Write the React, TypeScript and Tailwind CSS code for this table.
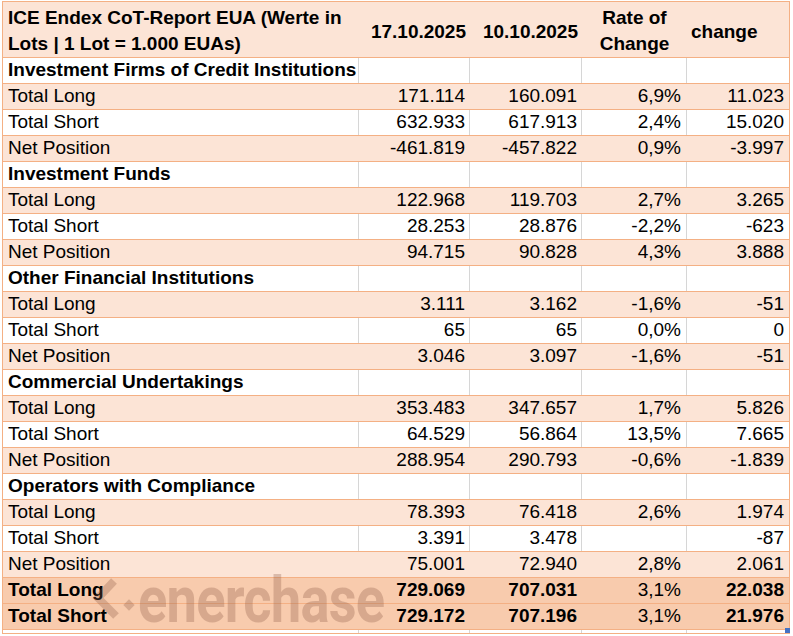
import React from "react";

type Row =
  | { kind: "section"; label: string }
  | { kind: "data"; label: string; a: string; b: string; rate: string; change: string; shade: boolean }
  | { kind: "total"; label: string; a: string; b: string; rate: string; change: string };

const sections: { title: string; rows: [string, string, string, string][] }[] = [
  {
    title: "Investment Firms of Credit Institutions",
    rows: [
      ["171.114", "160.091", "6,9%", "11.023"],
      ["632.933", "617.913", "2,4%", "15.020"],
      ["-461.819", "-457.822", "0,9%", "-3.997"],
    ],
  },
  {
    title: "Investment Funds",
    rows: [
      ["122.968", "119.703", "2,7%", "3.265"],
      ["28.253", "28.876", "-2,2%", "-623"],
      ["94.715", "90.828", "4,3%", "3.888"],
    ],
  },
  {
    title: "Other Financial Institutions",
    rows: [
      ["3.111", "3.162", "-1,6%", "-51"],
      ["65", "65", "0,0%", "0"],
      ["3.046", "3.097", "-1,6%", "-51"],
    ],
  },
  {
    title: "Commercial Undertakings",
    rows: [
      ["353.483", "347.657", "1,7%", "5.826"],
      ["64.529", "56.864", "13,5%", "7.665"],
      ["288.954", "290.793", "-0,6%", "-1.839"],
    ],
  },
  {
    title: "Operators with Compliance",
    rows: [
      ["78.393", "76.418", "2,6%", "1.974"],
      ["3.391", "3.478", "", "-87"],
      ["75.001", "72.940", "2,8%", "2.061"],
    ],
  },
];

const labels = ["Total Long", "Total Short", "Net Position"];

const rows: Row[] = [];
sections.forEach((s) => {
  rows.push({ kind: "section", label: s.title });
  s.rows.forEach((r, i) =>
    rows.push({ kind: "data", label: labels[i], a: r[0], b: r[1], rate: r[2], change: r[3], shade: i !== 1 })
  );
});
rows.push({ kind: "total", label: "Total Long", a: "729.069", b: "707.031", rate: "3,1%", change: "22.038" });
rows.push({ kind: "total", label: "Total Short", a: "729.172", b: "707.196", rate: "3,1%", change: "21.976" });

function Cells({ row }: { row: Row }) {
  const white = row.kind === "section" || (row.kind === "data" && !row.shade);
  const div = white ? "border-[#d6d6d6]" : "border-transparent";
  if (row.kind === "section") {
    return (
      <>
        <div className={`w-[356px] border-r ${div} pl-[5px] font-bold flex items-center whitespace-nowrap`}>{row.label}</div>
        <div className={`w-[111px] border-r ${div}`} />
        <div className={`w-[112px] border-r ${div}`} />
        <div className={`w-[105px] border-r ${div}`} />
        <div className="w-[102px]" />
      </>
    );
  }
  const bold = row.kind === "total" ? "font-bold" : "";
  return (
    <>
      <div className={`w-[356px] border-r ${div} pl-[5px] flex items-center ${bold}`}>{row.label}</div>
      <div className={`w-[111px] border-r ${div} pr-[4px] flex items-center justify-end ${bold}`}>{row.a}</div>
      <div className={`w-[112px] border-r ${div} pr-[4px] flex items-center justify-end ${bold}`}>{row.b}</div>
      <div className={`w-[105px] border-r ${div} pr-[5px] flex items-center justify-end`}>{row.rate}</div>
      <div className={`w-[102px] pr-[5px] flex items-center justify-end ${bold}`}>{row.change}</div>
    </>
  );
}

// semi-transparent "enerchase" logo lying over the totals
function Watermark() {
  return (
    <>
      <svg
        width="46"
        height="48"
        viewBox="0 0 46 48"
        className="pointer-events-none absolute left-[90px] top-[576px] text-[#8a5a44]/30"
      >
        <polyline
          points="24,5 8,22 26,40"
          fill="none"
          stroke="currentColor"
          strokeWidth="8"
          strokeLinejoin="miter"
        />
        <rect x="35" y="25" width="8" height="8" transform="rotate(45 39 29)" fill="currentColor" />
      </svg>
      <div
        className="pointer-events-none absolute left-[138px] top-[569px] origin-left scale-x-[0.85] text-[64px] font-bold leading-[64px] tracking-[-1px] text-[#8a5a44]/30"
        style={{ fontFamily: "Roboto, 'Liberation Sans', sans-serif" }}
      >
        enerchase
      </div>
    </>
  );
}

export default function App() {
  return (
    <div className="relative h-[636px] w-[793px] overflow-hidden bg-white text-black" style={{ fontFamily: "'Liberation Sans', Arial, sans-serif" }}>
      <div className="absolute left-[2px] top-[1px] w-[788px] border border-[#f4b084] text-[19px]">
        {/* header */}
        <div className="flex h-[56px] border-b border-[#f4b084] bg-[#fce4d6] font-bold leading-[26px]">
          <div className="w-[356px] pl-[5px] pt-[3px] flex items-center">
            <span>
              ICE Endex CoT-Report EUA (Werte in
              <br />
              Lots | 1 Lot = 1.000 EUAs)
            </span>
          </div>
          <div className="w-[111px] pr-[4px] pt-[5px] flex items-center justify-end">17.10.2025</div>
          <div className="w-[112px] pr-[4px] pt-[5px] flex items-center justify-end">10.10.2025</div>
          <div className="w-[105px] pt-[3px] flex items-center justify-center text-center">
            <span>
              Rate of
              <br />
              Change
            </span>
          </div>
          <div className="w-[102px] pl-[4px] pt-[5px] flex items-center">change</div>
        </div>
        {rows.map((row, i) => {
          const bg =
            row.kind === "total"
              ? "bg-[#f8cbad]"
              : row.kind === "data" && row.shade
              ? "bg-[#fce4d6]"
              : "bg-white";
          return (
            <div key={i} className={`flex h-[26px] border-b border-[#f4b084] ${bg}`}>
              <Cells row={row} />
            </div>
          );
        })}
        {/* trailing strip */}
        <div className="flex h-[3px] bg-white">
          <div className="w-[356px] border-r border-[#d6d6d6]" />
          <div className="w-[111px] border-r border-[#d6d6d6]" />
          <div className="w-[112px] border-r border-[#d6d6d6]" />
          <div className="w-[105px] border-r border-[#d6d6d6]" />
          <div className="w-[102px]" />
        </div>
      </div>
      <Watermark />
      <div className="absolute left-[785px] top-[628px] h-[5px] w-[5px] bg-[#4472c4]" />
    </div>
  );
}
